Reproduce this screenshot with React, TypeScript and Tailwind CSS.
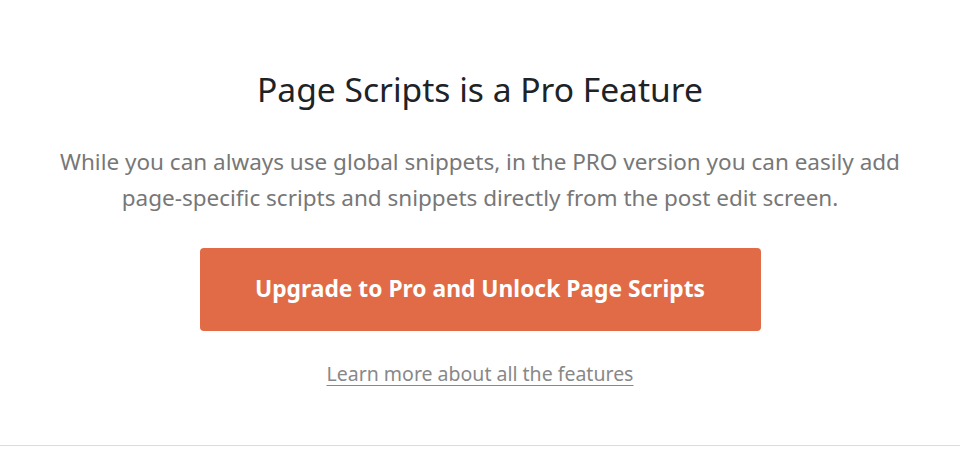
import React from 'react';

export default function App() {
    return (
        <div className="w-[960px] h-[454px] bg-white flex flex-col" style={{ fontFamily: '"Noto Sans", "Open Sans", sans-serif' }}>
            <div className="h-[446px] flex flex-col items-center border-b border-[#dcdcde]">
                <h1 className="mt-[67px] text-[33.6px] leading-[44px] text-[#1d2327] font-normal">
                    Page Scripts is a Pro Feature
                </h1>
                <p className="mt-[33px] text-[22.5px] leading-[36px] text-[#777] text-center w-[870px]">
                    While you can always use global snippets, in the PRO version you can easily add page-specific scripts and snippets directly from the post edit screen.
                </p>
                <a
                    href="#"
                    className="mt-[32px] w-[561px] h-[83px] rounded-[4px] bg-[#e06b46] text-white text-[22.8px] font-bold flex items-center justify-center"
                >
                    Upgrade to Pro and Unlock Page Scripts
                </a>
                <a href="#" className="mt-[29px] text-[19.5px] leading-[27px] text-[#888] underline underline-offset-4">
                    Learn more about all the features
                </a>
            </div>
        </div>
    );
}
